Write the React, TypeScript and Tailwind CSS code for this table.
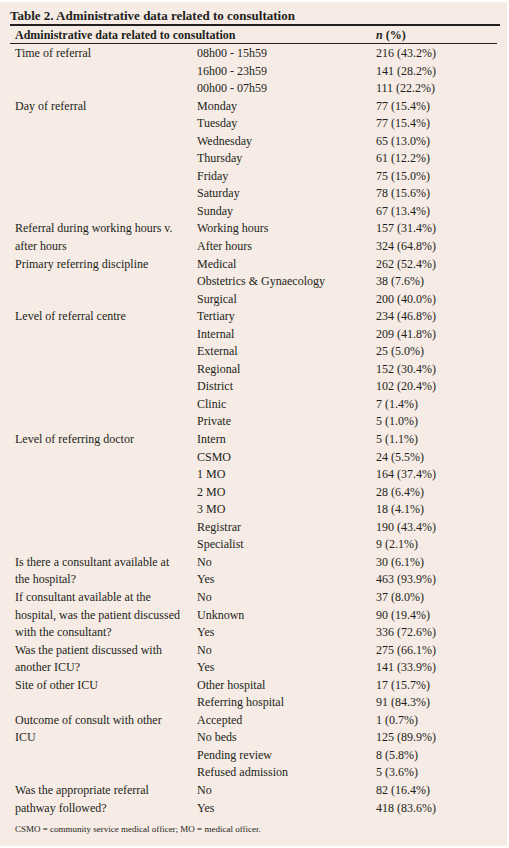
import React from "react";

// one group = label (split into lines) + its answer rows
type Group = { label: string[]; rows: [string, string][] };

const groups: Group[] = [
  {
    label: ["Time of referral"],
    rows: [
      ["08h00 - 15h59", "216 (43.2%)"],
      ["16h00 - 23h59", "141 (28.2%)"],
      ["00h00 - 07h59", "111 (22.2%)"],
    ],
  },
  {
    label: ["Day of referral"],
    rows: [
      ["Monday", "77 (15.4%)"],
      ["Tuesday", "77 (15.4%)"],
      ["Wednesday", "65 (13.0%)"],
      ["Thursday", "61 (12.2%)"],
      ["Friday", "75 (15.0%)"],
      ["Saturday", "78 (15.6%)"],
      ["Sunday", "67 (13.4%)"],
    ],
  },
  {
    label: ["Referral during working hours v.", "after hours"],
    rows: [
      ["Working hours", "157 (31.4%)"],
      ["After hours", "324 (64.8%)"],
    ],
  },
  {
    label: ["Primary referring discipline"],
    rows: [
      ["Medical", "262 (52.4%)"],
      ["Obstetrics & Gynaecology", "38 (7.6%)"],
      ["Surgical", "200 (40.0%)"],
    ],
  },
  {
    label: ["Level of referral centre"],
    rows: [
      ["Tertiary", "234 (46.8%)"],
      ["Internal", "209 (41.8%)"],
      ["External", "25 (5.0%)"],
      ["Regional", "152 (30.4%)"],
      ["District", "102 (20.4%)"],
      ["Clinic", "7 (1.4%)"],
      ["Private", "5 (1.0%)"],
    ],
  },
  {
    label: ["Level of referring doctor"],
    rows: [
      ["Intern", "5 (1.1%)"],
      ["CSMO", "24 (5.5%)"],
      ["1 MO", "164 (37.4%)"],
      ["2 MO", "28 (6.4%)"],
      ["3 MO", "18 (4.1%)"],
      ["Registrar", "190 (43.4%)"],
      ["Specialist", "9 (2.1%)"],
    ],
  },
  {
    label: ["Is there a consultant available at", "the hospital?"],
    rows: [
      ["No", "30 (6.1%)"],
      ["Yes", "463 (93.9%)"],
    ],
  },
  {
    label: [
      "If consultant available at the",
      "hospital, was the patient discussed",
      "with the consultant?",
    ],
    rows: [
      ["No", "37 (8.0%)"],
      ["Unknown", "90 (19.4%)"],
      ["Yes", "336 (72.6%)"],
    ],
  },
  {
    label: ["Was the patient discussed with", "another ICU?"],
    rows: [
      ["No", "275 (66.1%)"],
      ["Yes", "141 (33.9%)"],
    ],
  },
  {
    label: ["Site of other ICU"],
    rows: [
      ["Other hospital", "17 (15.7%)"],
      ["Referring hospital", "91 (84.3%)"],
    ],
  },
  {
    label: ["Outcome of consult with other", "ICU"],
    rows: [
      ["Accepted", "1 (0.7%)"],
      ["No beds", "125 (89.9%)"],
      ["Pending review", "8 (5.8%)"],
      ["Refused admission", "5 (3.6%)"],
    ],
  },
  {
    label: ["Was the appropriate referral", "pathway followed?"],
    rows: [
      ["No", "82 (16.4%)"],
      ["Yes", "418 (83.6%)"],
    ],
  },
];

export default function App() {
  return (
    <div className="w-[509px] h-[848px] bg-white pt-[2px] font-['Liberation_Serif',serif] text-[#231f20]">
      <div className="w-[507px] h-[844px] bg-[#f6ebe5] px-[10px] pt-[5px]">
        <div className="h-[17px] leading-[17px] text-[13px] font-bold">
          Table 2. Administrative data related to consultation
        </div>
        <div className="h-[2px] bg-[#231f20] mr-[-3px]" />

        {/* header */}
        <div className="flex h-[17px] items-center pl-[5px] text-[12px] font-bold border-b border-[#231f20] box-content">
          <div className="w-[361px]">Administrative data related to consultation</div>
          <div>
            <span className="italic">n</span> (%)
          </div>
        </div>

        <div className="pl-[5px] pt-[1px] text-[12px] leading-[17.56px]">
          {groups.map((g) => (
            <div key={g.label.join(" ")} className="flex">
              <div className="w-[182px] shrink-0">
                {g.label.map((l) => (
                  <div key={l} className="h-[17.56px] whitespace-nowrap">
                    {l}
                  </div>
                ))}
              </div>
              <div className="flex-1">
                {g.rows.map(([a, b]) => (
                  <div key={a} className="flex h-[17.56px]">
                    <div className="w-[179px] shrink-0 whitespace-nowrap">{a}</div>
                    <div className="whitespace-nowrap">{b}</div>
                  </div>
                ))}
              </div>
            </div>
          ))}
        </div>

        <div className="mt-[6px] pl-[5px] text-[9px] leading-[12px]">
          CSMO = community service medical officer; MO = medical officer.
        </div>
      </div>
    </div>
  );
}
